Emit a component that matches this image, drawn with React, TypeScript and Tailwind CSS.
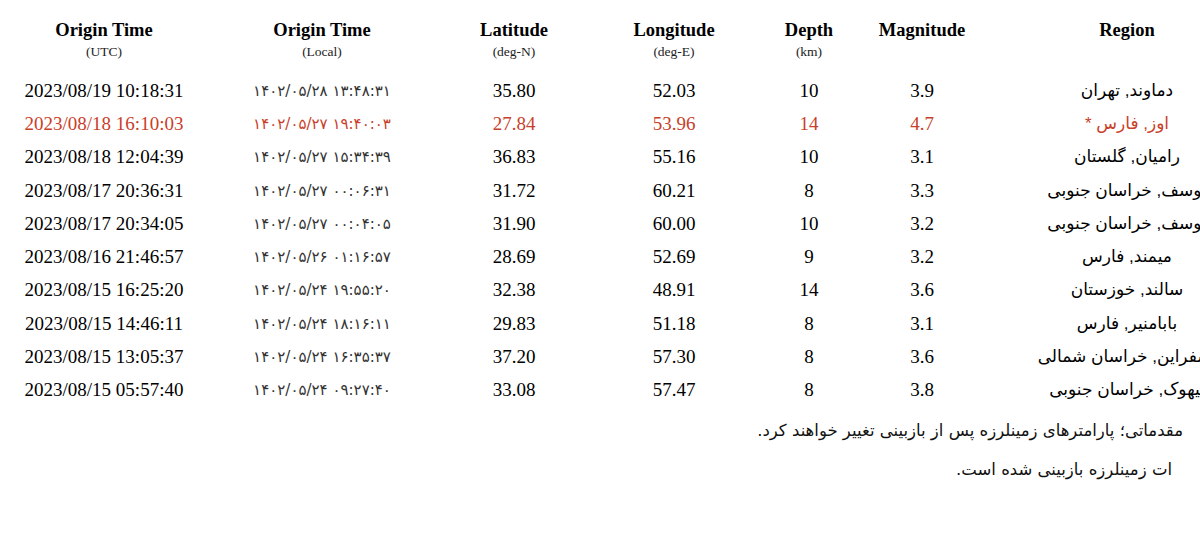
import React from "react";

type Quake = {
  utc: string;
  local: string;
  lat: string;
  lon: string;
  depth: string;
  mag: string;
  region: string;
  flagged?: boolean;
};

const quakes: Quake[] = [
  { utc: "2023/08/19 10:18:31", local: "۱۴۰۲/۰۵/۲۸ ۱۳:۴۸:۳۱", lat: "35.80", lon: "52.03", depth: "10", mag: "3.9", region: "دماوند, تهران" },
  { utc: "2023/08/18 16:10:03", local: "۱۴۰۲/۰۵/۲۷ ۱۹:۴۰:۰۳", lat: "27.84", lon: "53.96", depth: "14", mag: "4.7", region: "* اوز, فارس", flagged: true },
  { utc: "2023/08/18 12:04:39", local: "۱۴۰۲/۰۵/۲۷ ۱۵:۳۴:۳۹", lat: "36.83", lon: "55.16", depth: "10", mag: "3.1", region: "رامیان, گلستان" },
  { utc: "2023/08/17 20:36:31", local: "۱۴۰۲/۰۵/۲۷ ۰۰:۰۶:۳۱", lat: "31.72", lon: "60.21", depth: "8", mag: "3.3", region: "یوسف, خراسان جنوبی" },
  { utc: "2023/08/17 20:34:05", local: "۱۴۰۲/۰۵/۲۷ ۰۰:۰۴:۰۵", lat: "31.90", lon: "60.00", depth: "10", mag: "3.2", region: "یوسف, خراسان جنوبی" },
  { utc: "2023/08/16 21:46:57", local: "۱۴۰۲/۰۵/۲۶ ۰۱:۱۶:۵۷", lat: "28.69", lon: "52.69", depth: "9", mag: "3.2", region: "میمند, فارس" },
  { utc: "2023/08/15 16:25:20", local: "۱۴۰۲/۰۵/۲۴ ۱۹:۵۵:۲۰", lat: "32.38", lon: "48.91", depth: "14", mag: "3.6", region: "سالند, خوزستان" },
  { utc: "2023/08/15 14:46:11", local: "۱۴۰۲/۰۵/۲۴ ۱۸:۱۶:۱۱", lat: "29.83", lon: "51.18", depth: "8", mag: "3.1", region: "بابامنیر, فارس" },
  { utc: "2023/08/15 13:05:37", local: "۱۴۰۲/۰۵/۲۴ ۱۶:۳۵:۳۷", lat: "37.20", lon: "57.30", depth: "8", mag: "3.6", region: "اسفراین, خراسان شمالی" },
  { utc: "2023/08/15 05:57:40", local: "۱۴۰۲/۰۵/۲۴ ۰۹:۲۷:۴۰", lat: "33.08", lon: "57.47", depth: "8", mag: "3.8", region: "بیهوک, خراسان جنوبی" },
];

const headers = [
  { title: "Origin Time", sub: "(UTC)" },
  { title: "Origin Time", sub: "(Local)" },
  { title: "Latitude", sub: "(deg-N)" },
  { title: "Longitude", sub: "(deg-E)" },
  { title: "Depth", sub: "(km)" },
  { title: "Magnitude", sub: "" },
  { title: "Region", sub: "" },
];

const cols = "grid grid-cols-[208px_228px_156px_164px_106px_120px_290px]";

export default function App() {
  return (
    <div className="h-[542px] w-[1200px] overflow-hidden bg-white text-black">
      <div className="w-[1272px] font-['Liberation_Serif','DejaVu_Sans',serif]">
        <div className={`${cols} pt-[19px]`}>
          {headers.map((h, i) => (
            <div key={i} className="flex flex-col items-center">
              <div className="text-[18.5px] font-bold leading-[22px]">{h.title}</div>
              <div className="mt-[2px] h-[18px] text-[13.5px] leading-[18px] text-[#222]">{h.sub}</div>
            </div>
          ))}
        </div>

        <div className="mt-[13px]">
          {quakes.map((q, i) => (
            <div
              key={i}
              className={`${cols} h-[33.3px] items-center text-[19px] leading-[22px] ${q.flagged ? "text-[#c9402a]" : "text-black"}`}
            >
              <div className="text-center">{q.utc}</div>
              <div
                className={`text-center font-['DejaVu_Sans',sans-serif] text-[15px] tracking-[1.4px] ${q.flagged ? "" : "text-[#333]"}`}
              >
                {q.local}
              </div>
              <div className="text-center">{q.lat}</div>
              <div className="text-center">{q.lon}</div>
              <div className="text-center">{q.depth}</div>
              <div className="text-center">{q.mag}</div>
              <div className="flex justify-center whitespace-nowrap font-['Liberation_Sans','DejaVu_Sans',sans-serif] text-[17px]">
                <span>{q.region}</span>
              </div>
            </div>
          ))}
        </div>
      </div>

      <div dir="rtl" className="mt-[12px] font-['DejaVu_Sans',sans-serif] text-[16.5px] leading-[24px] text-[#111]">
        <p className="mr-[17px]">مقدماتی؛ پارامترهای زمینلرزه پس از بازبینی تغییر خواهند کرد.</p>
        <p className="mr-[28px] mt-[15px]">ات زمینلرزه بازبینی شده است.</p>
      </div>
    </div>
  );
}
